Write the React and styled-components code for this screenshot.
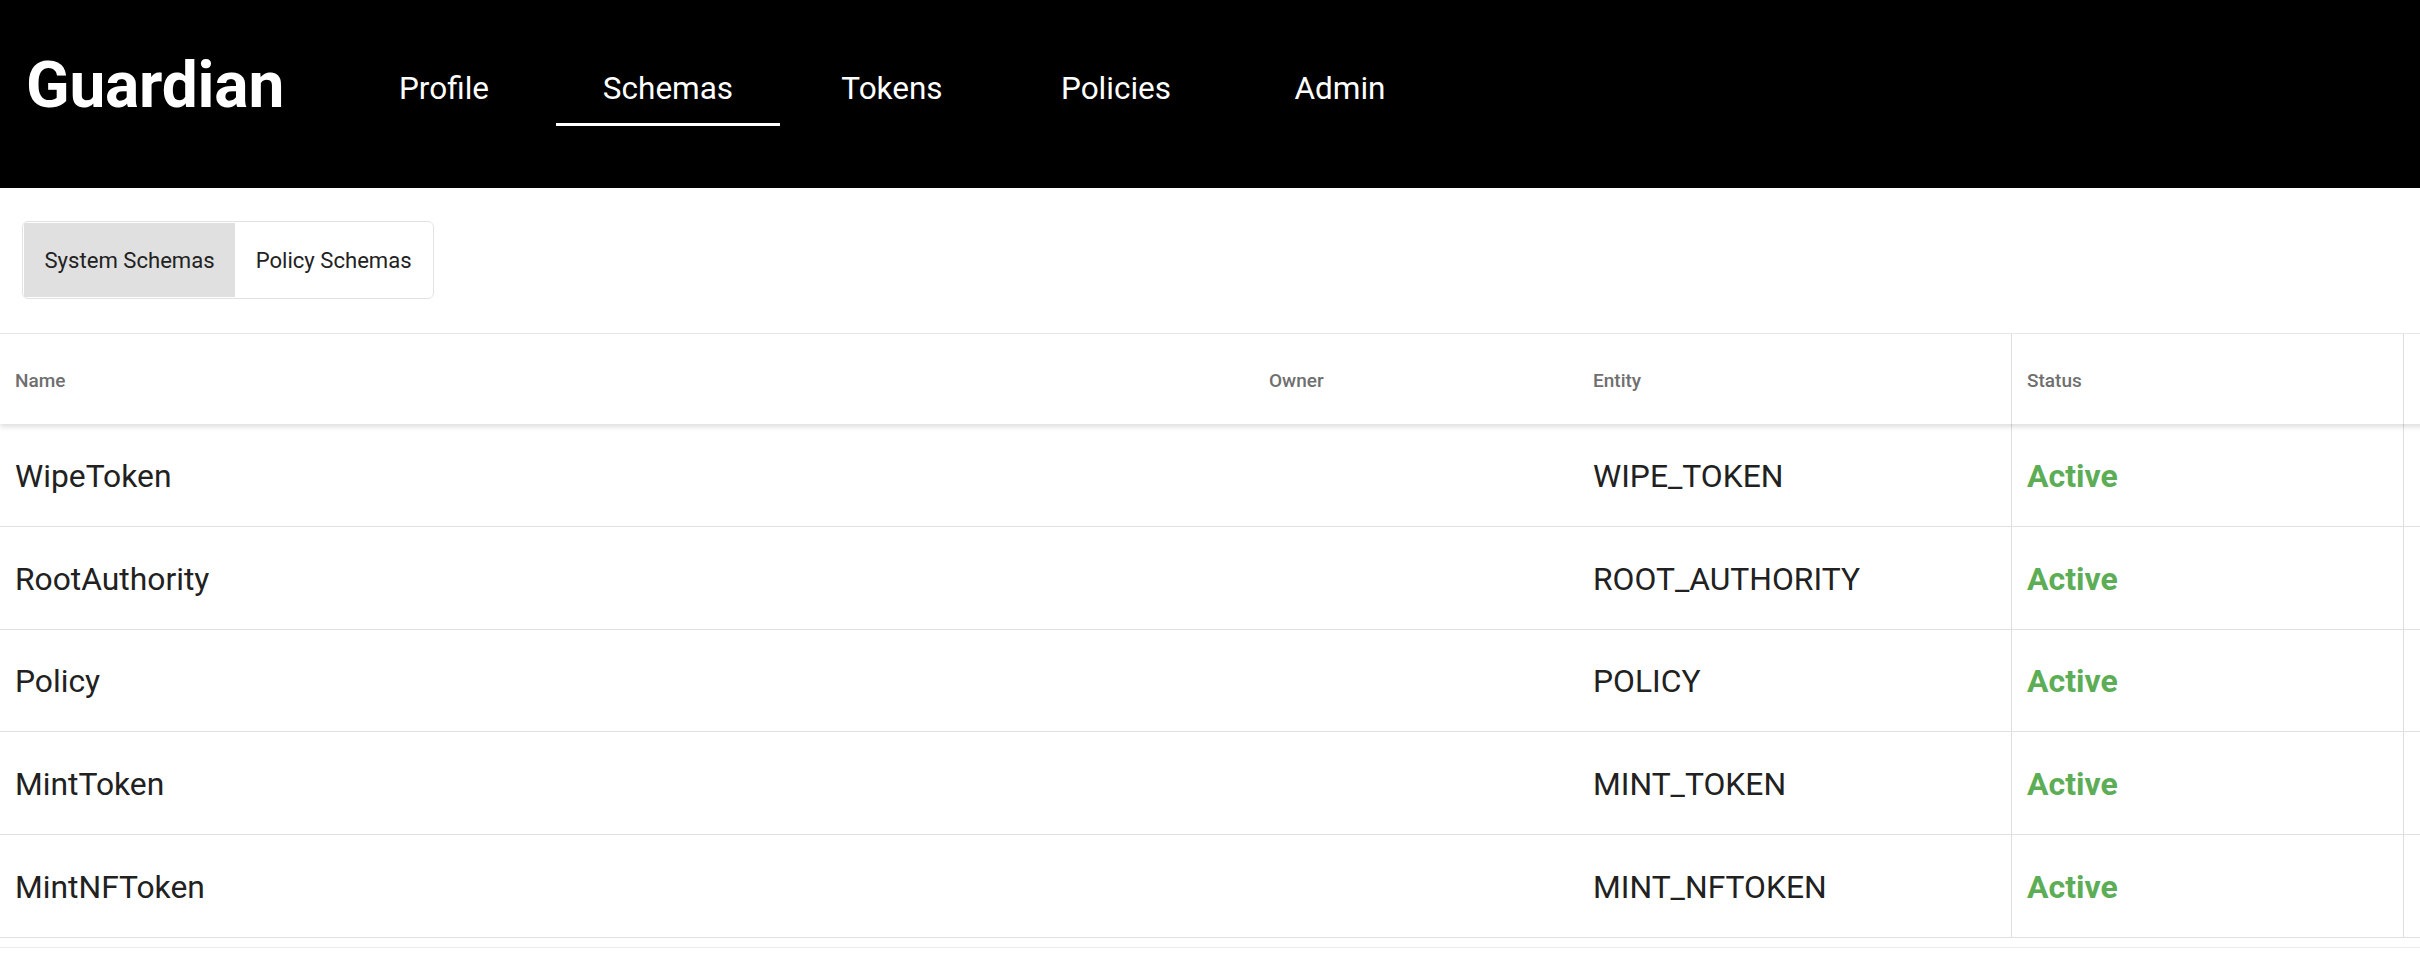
import React from "react";
import styled, { createGlobalStyle } from "styled-components";

const GlobalStyle = createGlobalStyle`
  html, body {
    margin: 0;
    padding: 0;
    background: #ffffff;
    font-family: Roboto, "Liberation Sans", sans-serif;
  }
  * {
    box-sizing: border-box;
  }
`;

// top bar
const Header = styled.header`
  height: 188px;
  background: #000;
  color: #fff;
  display: flex;
  align-items: flex-start;
  padding-left: 26px;
`;

const Logo = styled.div`
  font-size: 64px;
  font-weight: 700;
  line-height: 64px;
  margin-top: 54px;
  width: 306px;
  letter-spacing: -0.2px;
`;

const Nav = styled.nav`
  display: flex;
  margin-top: 50px;
`;

const NavTab = styled.div`
  width: 224px;
  height: 76px;
  display: flex;
  align-items: center;
  justify-content: center;
  font-size: 31.5px;
  font-weight: 400;
  padding-top: 3px;
  border-bottom: 3px solid ${(p) => (p.$active ? "#fff" : "transparent")};
`;

// view switcher
const ToggleBar = styled.div`
  padding: 33px 0 34px 22px;
`;

const ToggleGroup = styled.div`
  display: inline-flex;
  height: 78px;
  border: 1.5px solid #e2e2e2;
  border-radius: 6px;
  padding: 1px;
  overflow: hidden;
`;

const ToggleButton = styled.div`
  display: flex;
  align-items: center;
  padding: 0 20.5px;
  font-size: 22.1px;
  color: #222;
  background: ${(p) => (p.$selected ? "#e0e0e0" : "#fff")};
`;

// table
const TableWrap = styled.div`
  width: 100%;
  overflow: hidden;
  border-top: 1px solid #e6e6e6;
`;

const Grid = styled.div`
  display: grid;
  grid-template-columns: 1254px 324px 433px 392px 200px;
  width: 2603px;
`;

const HeadRow = styled(Grid)`
  height: 90px;
  background: #fff;
  position: relative;
  z-index: 1;
  box-shadow: 0 3px 5px rgba(0, 0, 0, 0.13);
`;

const BodyRow = styled(Grid)`
  height: 102.8px;
  border-bottom: 1.5px solid #e0e0e0;
`;

const Cell = styled.div`
  display: flex;
  align-items: center;
  padding-left: 15px;
  padding-top: 2px;
  border-left: ${(p) => (p.$divider ? "1.5px solid #dedede" : "none")};
`;

const HeadCell = styled(Cell)`
  font-size: 19px;
  font-weight: 500;
  color: #6f6f6f;
`;

const TextCell = styled(Cell)`
  font-size: 31.8px;
  color: #212121;
`;

const StatusText = styled.span`
  font-size: 32px;
  font-weight: 700;
  color: #5cad56;
`;

const Footer = styled.div`
  margin-top: 9px;
  border-top: 1.5px solid #ececec;
  height: 20px;
`;

const schemas = [
  { name: "WipeToken", owner: "", entity: "WIPE_TOKEN", status: "Active" },
  { name: "RootAuthority", owner: "", entity: "ROOT_AUTHORITY", status: "Active" },
  { name: "Policy", owner: "", entity: "POLICY", status: "Active" },
  { name: "MintToken", owner: "", entity: "MINT_TOKEN", status: "Active" },
  { name: "MintNFToken", owner: "", entity: "MINT_NFTOKEN", status: "Active" },
];

const tabs = ["Profile", "Schemas", "Tokens", "Policies", "Admin"];

function App() {
  return (
    <>
      <GlobalStyle />
      <Header>
        <Logo>Guardian</Logo>
        <Nav>
          {tabs.map((t) => (
            <NavTab key={t} $active={t === "Schemas"}>
              {t}
            </NavTab>
          ))}
        </Nav>
      </Header>
      <ToggleBar>
        <ToggleGroup>
          <ToggleButton $selected>System Schemas</ToggleButton>
          <ToggleButton>Policy Schemas</ToggleButton>
        </ToggleGroup>
      </ToggleBar>
      <TableWrap>
        <HeadRow>
          <HeadCell>Name</HeadCell>
          <HeadCell>Owner</HeadCell>
          <HeadCell>Entity</HeadCell>
          <HeadCell $divider>Status</HeadCell>
          <HeadCell $divider />
        </HeadRow>
        {schemas.map((s) => (
          <BodyRow key={s.name}>
            <TextCell>{s.name}</TextCell>
            <TextCell>{s.owner}</TextCell>
            <TextCell>{s.entity}</TextCell>
            <TextCell $divider>
              <StatusText>{s.status}</StatusText>
            </TextCell>
            <TextCell $divider />
          </BodyRow>
        ))}
        <Footer />
      </TableWrap>
    </>
  );
}

export default App;
